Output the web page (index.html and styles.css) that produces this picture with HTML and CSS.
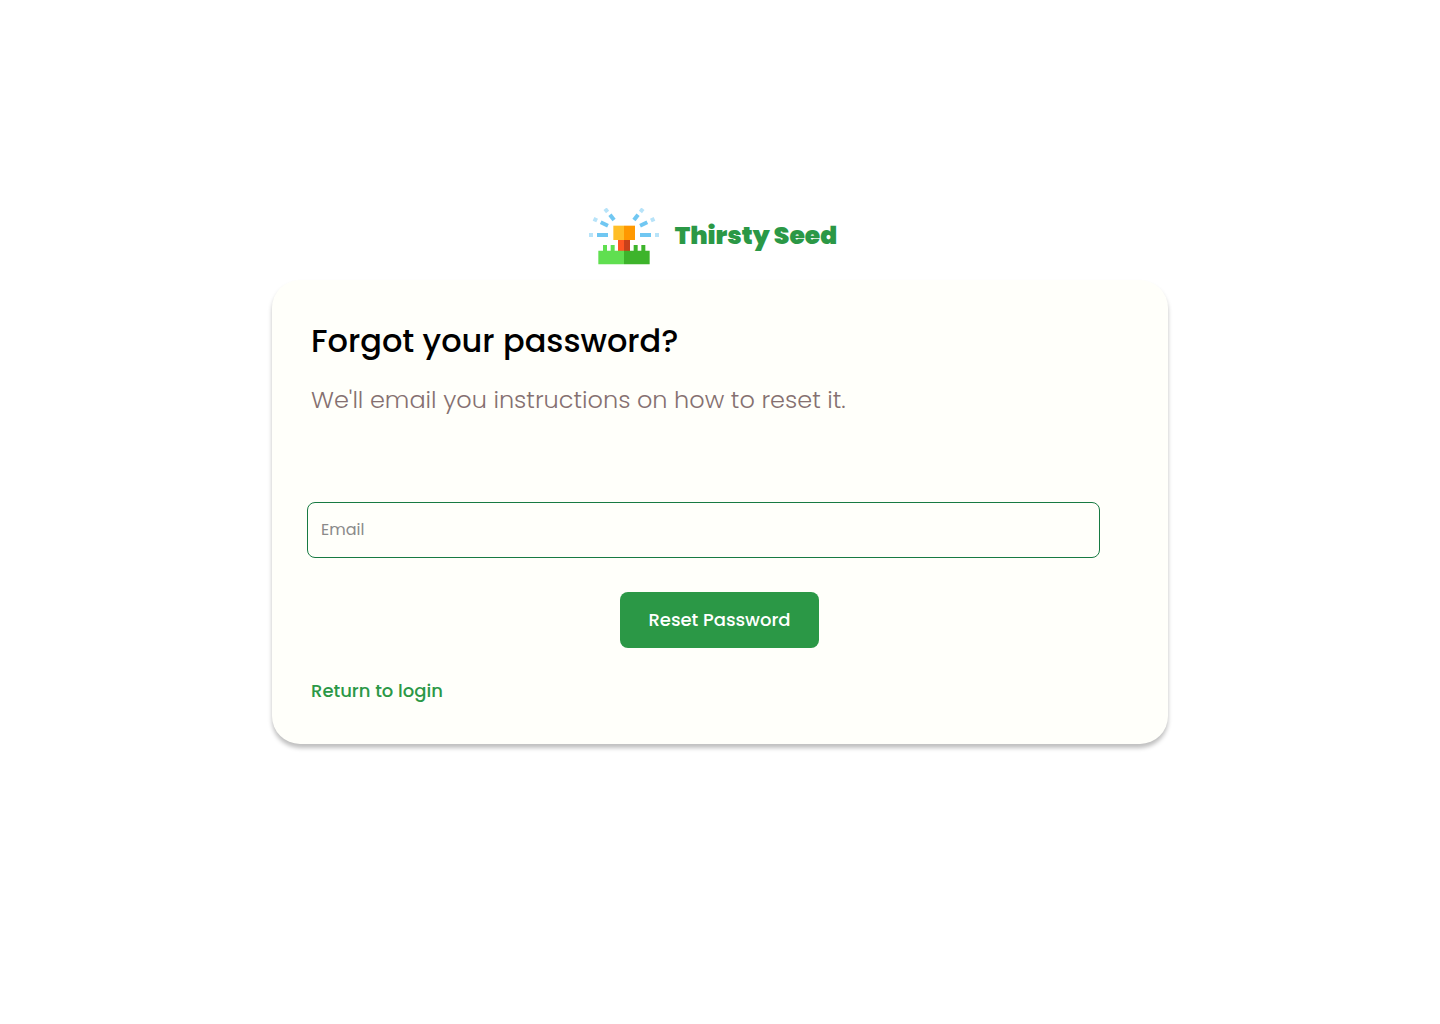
FILE: index.html
```html
<!DOCTYPE html>
<html lang="en">
<head>
  <meta charset="utf-8">
  <meta name="viewport" content="width=device-width, initial-scale=1">
  <title>Forgot your password? - Thirsty Seed</title>
  <link rel="stylesheet" href="styles.css">
</head>
<body>
  <main class="page">
    <header class="brand">
      <svg class="brand-logo" viewBox="27 24 210 171" aria-hidden="true">
        <defs>
          <g id="spray">
            <g fill="#70c7f2">
              <rect x="51" y="99" width="33" height="12"/>
              <rect x="61" y="66" width="24" height="12" transform="rotate(25 73 72)"/>
              <rect x="86" y="46" width="20" height="12" transform="rotate(52 96 52)"/>
            </g>
            <g fill="#b7e3f9">
              <rect x="27" y="99" width="12" height="12"/>
              <rect x="40" y="53" width="12" height="12" transform="rotate(25 46 59)"/>
              <rect x="73" y="25" width="12" height="12" transform="rotate(52 79 31)"/>
            </g>
          </g>
        </defs>
        <use href="#spray"/>
        <use href="#spray" transform="translate(264 0) scale(-1 1)"/>
        <path fill="#ffbe27" d="M100 77h32v43h-32z"/>
        <path fill="#ff9800" d="M132 77h33v43h-33z"/>
        <path fill="#ff5722" d="M114 120h18v33h-18z"/>
        <path fill="#c8401a" d="M132 120h18v33h-18z"/>
        <path fill="#60df50" d="M55 152h14v-17h12v17h11v-17h12v17h28v41H55z"/>
        <path fill="#3db42b" d="M132 152h29v-17h12v17h11v-17h12v17h13v41h-77z"/>
      </svg>
      <span class="brand-name">Thirsty Seed</span>
    </header>

    <section class="card">
      <h1 class="title">Forgot your password?</h1>
      <p class="subtitle">We'll email you instructions on how to reset it.</p>
      <form class="form">
        <input class="field" type="email" name="email" placeholder="Email" aria-label="Email">
        <button class="submit" type="submit">Reset Password</button>
      </form>
      <a class="return-link" href="#login">Return to login</a>
    </section>
  </main>
</body>
</html>
```
FILE: styles.css
```css
* {
  box-sizing: border-box;
}

body {
  margin: 0;
  background: #fff;
  font-family: Poppins, Inter, "Liberation Sans", sans-serif;
}

.page {
  display: flex;
  flex-direction: column;
  align-items: center;
  gap: 15px;
  min-height: 100vh;
  padding: 208px 24px 48px;
}

.brand {
  display: flex;
  align-items: center;
  gap: 16px;
  padding-right: 14px;
}

.brand-logo {
  width: 70px;
  height: 57px;
}

.brand-name {
  padding-bottom: 2px;
  color: #2b9846;
  font-size: 25px;
  font-weight: 900;
  line-height: 36px;
}

.card {
  width: 100%;
  max-width: 896px;
  padding: 37px 68px 39px 35px;
  border-radius: 28px;
  background: #fffffa;
  box-shadow: 0 4px 4px rgba(0, 0, 0, 0.25);
}

.title {
  margin: 0;
  padding-left: 4px;
  color: #000;
  font-size: 32px;
  font-weight: 500;
  line-height: 48px;
}

.subtitle {
  margin: 17px 0 84px;
  padding-left: 4px;
  color: #857070;
  font-size: 24px;
  font-weight: 300;
  line-height: 36px;
}

.form {
  display: flex;
  flex-direction: column;
  gap: 34px;
}

.field {
  width: 100%;
  height: 56px;
  padding: 0 13px 2px;
  border: 1px solid #177a42;
  border-radius: 8px;
  background: transparent;
  color: #000;
  font: 400 16px/24px Poppins, Inter, "Liberation Sans", sans-serif;
}

.field::placeholder {
  color: #8a8a8a;
  opacity: 1;
}

.submit {
  align-self: center;
  height: 56px;
  margin-left: 32px;
  padding: 0 28px;
  border: 0;
  border-radius: 8px;
  background: #2b9846;
  color: #fff;
  font: 500 18px/28px Poppins, Inter, "Liberation Sans", sans-serif;
  cursor: pointer;
}

.return-link {
  display: inline-block;
  margin-top: 29px;
  padding-left: 4px;
  color: #2b9846;
  font-size: 18px;
  font-weight: 500;
  line-height: 28px;
  text-decoration: none;
}
```
